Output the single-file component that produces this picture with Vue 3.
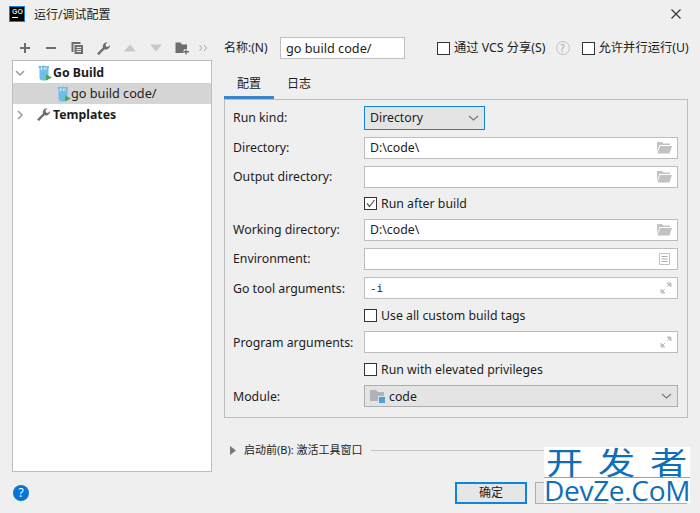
<template>
  <div class="dialog">
    <header class="titlebar">
      <span class="app-logo"><b>GO</b><i></i></span>
      <span class="title-text">运行/调试配置</span>
      <svg class="close" width="10" height="10" viewBox="0 0 10 10">
        <path d="M.5 .5l9 9M9.500 .5l-9 9" stroke="#333" stroke-width="1.200" fill="none" />
      </svg>
    </header>

    <div class="content">
      <aside class="side">
        <div class="toolbar">
          <svg width="14" height="14" viewBox="0 0 14 14"><path d="M7 2v10M2 7h10" stroke="#6e6e6e" stroke-width="2" /></svg>
          <svg width="14" height="14" viewBox="0 0 14 14"><path d="M2 7h10" stroke="#6e6e6e" stroke-width="2" /></svg>
          <svg width="14" height="14" viewBox="0 0 14 14">
            <path d="M1.500 1h9v2H3.500v8h-2z" fill="#6e6e6e" />
            <path d="M4.500 4h8.500v9H4.500z" fill="#6e6e6e" />
            <path d="M6.500 6.500h4.500M6.500 8.500h4.500M6.500 10.500h4.500" stroke="#eee" stroke-width="1" />
          </svg>
          <svg width="15" height="15" viewBox="0 0 15 15">
            <path d="M1 12.500L7 6.500C6.300 4 8 1 11.500 1.200L9.500 3.500l.5 2 2 .5L14 4C14.200 7.500 11 9 8.500 8.300L3 14z" fill="#6e6e6e" />
          </svg>
          <svg width="14" height="14" viewBox="0 0 14 14"><path d="M1 10.500L7 3.500 13 10.500z" fill="#c8c8c8" /></svg>
          <svg width="14" height="14" viewBox="0 0 14 14"><path d="M1 3.500L7 10.500 13 3.500z" fill="#c8c8c8" /></svg>
          <svg width="15" height="14" viewBox="0 0 15 14">
            <path d="M0.500 1.500h5l1.500 2h5v8.500H0.500z" fill="#6e6e6e" />
            <path d="M11 8v5.500M8.500 10.700h5.500" stroke="#efefef" stroke-width="3.500" />
            <path d="M11 8.500v5M8.500 10.800h5.500" stroke="#6e6e6e" stroke-width="1.400" />
          </svg>
          <svg class="more" width="9" height="8" viewBox="0 0 9 8"><path d="M0.500 1l2.500 3-2.500 3M5 1l2.500 3L5 7" stroke="#a5a5a5" fill="none" /></svg>
        </div>

        <div class="tree">
          <div class="tree-row">
            <svg class="arrow" width="10" height="10" viewBox="0 0 10 10"><path d="M1 3l4 4 4-4" stroke="#9a9a9a" stroke-width="1.500" fill="none" /></svg>
            <svg class="gopher" width="14" height="16" viewBox="0 0 14 16">
              <path d="M.5 1.500C1 .5 2.500 .5 3 1.300 4.500 .3 7 .3 8.500 1.300 9 .5 10.500 .5 11 1.500c.3 .8 0 1.300-.5 1.700V12c0 2.500-1 3.500-4.500 3.500S1.500 14.500 1.500 12V3.200C1 2.800 .2 2.300 .5 1.500z" fill="#6cbfe6" />
              <circle cx="4" cy="3.800" r="1.400" fill="#fff" /><circle cx="7.600" cy="3.800" r="1.400" fill="#fff" />
              <circle cx="4.300" cy="3.900" r=".6" fill="#33566b" /><circle cx="7.900" cy="3.900" r=".6" fill="#33566b" />
              <path d="M8 9.500l6 3-6 3z" fill="#4ca64c" />
            </svg>
            <b>Go Build</b>
          </div>
          <div class="tree-row selected child">
            <svg class="gopher" width="14" height="16" viewBox="0 0 14 16">
              <path d="M.5 1.500C1 .5 2.500 .5 3 1.300 4.500 .3 7 .3 8.500 1.300 9 .5 10.500 .5 11 1.500c.3 .8 0 1.300-.5 1.700V12c0 2.500-1 3.500-4.500 3.500S1.500 14.500 1.500 12V3.200C1 2.800 .2 2.300 .5 1.500z" fill="#6cbfe6" />
              <circle cx="4" cy="3.800" r="1.400" fill="#fff" /><circle cx="7.600" cy="3.800" r="1.400" fill="#fff" />
              <circle cx="4.300" cy="3.900" r=".6" fill="#33566b" /><circle cx="7.900" cy="3.900" r=".6" fill="#33566b" />
              <path d="M8 9.500l6 3-6 3z" fill="#4ca64c" />
            </svg>
            <span class="config-name">go build code/</span>
          </div>
          <div class="tree-row">
            <svg class="arrow" width="10" height="10" viewBox="0 0 10 10"><path d="M3 1l4 4-4 4" stroke="#9a9a9a" stroke-width="1.500" fill="none" /></svg>
            <svg class="wrench" width="15" height="15" viewBox="0 0 15 15">
              <path d="M1 12.500L7 6.500C6.300 4 8 1 11.500 1.200L9.500 3.500l.5 2 2 .5L14 4C14.200 7.500 11 9 8.500 8.300L3 14z" fill="#6e6e6e" />
            </svg>
            <b>Templates</b>
          </div>
        </div>
      </aside>

      <main class="main">
        <div class="name-row">
          <label class="name-label">名称:(N)</label>
          <div class="input name-input"><span class="config-name">go build code/</span></div>
          <label class="check vcs"><span class="box"></span>通过 VCS 分享(S)</label>
          <span class="help-grey">?</span>
          <label class="check"><span class="box"></span>允许并行运行(U)</label>
        </div>

        <div class="tabs">
          <span class="tab active">配置</span>
          <span class="tab">日志</span>
        </div>

        <section class="panel">
          <div class="form-row">
            <label>Run kind:</label>
            <div class="combo focus"><span>Directory</span><svg width="11" height="7" viewBox="0 0 11 7"><path d="M1 1l4.500 4L10 1" stroke="#777" stroke-width="1.200" fill="none" /></svg></div>
          </div>
          <div class="form-row">
            <label>Directory:</label>
            <div class="input field"><span>D:\code\</span><svg class="folder" width="15" height="12" viewBox="0 0 15 12"><path d="M0 0h5l1.500 1.500H13V3H2.500L0 10z" fill="#c2c2c2" /><path d="M3 4h12l-2.500 7.500H.5z" fill="#c2c2c2" /></svg></div>
          </div>
          <div class="form-row">
            <label>Output directory:</label>
            <div class="input field"><span></span><svg class="folder" width="15" height="12" viewBox="0 0 15 12"><path d="M0 0h5l1.500 1.500H13V3H2.500L0 10z" fill="#c2c2c2" /><path d="M3 4h12l-2.500 7.500H.5z" fill="#c2c2c2" /></svg></div>
          </div>
          <div class="form-row check-row tall-17">
            <label></label>
            <div class="check"><span class="box"><svg width="11" height="11" viewBox="0 0 11 11"><path d="M2 5.500l2.500 3L9.500 2" stroke="#555" stroke-width="1.200" fill="none" /></svg></span><span>Run after build</span></div>
          </div>
          <div class="form-row">
            <label>Working directory:</label>
            <div class="input field"><span>D:\code\</span><svg class="folder" width="15" height="12" viewBox="0 0 15 12"><path d="M0 0h5l1.500 1.500H13V3H2.500L0 10z" fill="#c2c2c2" /><path d="M3 4h12l-2.500 7.500H.5z" fill="#c2c2c2" /></svg></div>
          </div>
          <div class="form-row">
            <label>Environment:</label>
            <div class="input field"><span></span><svg class="env" width="11" height="12" viewBox="0 0 11 12"><path d="M.5 .5h10v11H.5z" fill="none" stroke="#c2c2c2" /><path d="M2.500 3.500h6M2.500 6h6M2.500 8.500h6" stroke="#b0b0b0" /></svg></div>
          </div>
          <div class="form-row nudge">
            <label>Go tool arguments:</label>
            <div class="input field"><span class="mono">-i</span><svg class="expand" width="12" height="12" viewBox="0 0 12 12"><path d="M7 1h4v4zM1 11V7l4 4zM9.500 2.500L7 5M2.500 9.500L5 7" fill="#c2c2c2" stroke="#c2c2c2" /></svg></div>
          </div>
          <div class="form-row check-row nudge">
            <label></label>
            <div class="check"><span class="box"></span><span class="check-text">Use all custom build tags</span></div>
          </div>
          <div class="form-row nudge">
            <label>Program arguments:</label>
            <div class="input field"><span></span><svg class="expand" width="12" height="12" viewBox="0 0 12 12"><path d="M7 1h4v4zM1 11V7l4 4zM9.500 2.500L7 5M2.500 9.500L5 7" fill="#c2c2c2" stroke="#c2c2c2" /></svg></div>
          </div>
          <div class="form-row check-row nudge">
            <label></label>
            <div class="check"><span class="box"></span><span class="check-text">Run with elevated privileges</span></div>
          </div>
          <div class="form-row nudge">
            <label>Module:</label>
            <div class="combo wide">
              <span class="module">
                <svg width="15" height="13" viewBox="0 0 15 13"><path d="M0 0h6l2 2h6v9H0z" fill="#afb3b8" /><path d="M8 6h7v7H8z" fill="#e4e4e4" /><path d="M9 7h6v6H9z" fill="#4b9fdc" /></svg>
                <span class="check-text">code</span>
              </span>
              <svg width="11" height="7" viewBox="0 0 11 7"><path d="M1 1l4.500 4L10 1" stroke="#777" stroke-width="1.200" fill="none" /></svg>
            </div>
          </div>
        </section>

        <div class="before-run">
          <svg width="6" height="9" viewBox="0 0 6 9"><path d="M0 0l6 4.500L0 9z" fill="#777" /></svg>
          <span>启动前(B): 激活工具窗口</span>
          <i class="rule"></i>
        </div>
      </main>
    </div>

    <footer class="footer">
      <span class="help">?</span>
      <div class="buttons">
        <button class="btn primary">确定</button>
        <button class="btn"></button>
        <button class="btn"></button>
      </div>
    </footer>

    <div class="watermark">
      <div class="wm-top"><span>开</span><span>发</span><span>者</span></div>
      <div class="wm-bottom">DevZe.CoM</div>
    </div>
  </div>
</template>

<script setup>
</script>

<style>
html, body {
  margin: 0;
  background: #efefef;
}
</style>

<style scoped>
* {
  box-sizing: border-box;
}

.dialog {
  position: relative;
  width: 700px;
  height: 513px;
  overflow: hidden;
  background: #efefef;
  color: #1c1c1c;
  font-family: "Noto Sans", "Noto Sans CJK SC", sans-serif;
  font-size: 12.3px;
  line-height: 16px;
}

.titlebar {
  display: flex;
  align-items: center;
  height: 30px;
  padding: 0 19px 0 9px;
}

.app-logo {
  display: flex;
  flex-direction: column;
  width: 16px;
  height: 16px;
  margin: -2px 9px 0 0;
  padding: 1px 2px;
  background: #000;
  border: 1px solid #1380d8;
}

.app-logo b {
  font-size: 7px;
  line-height: 7px;
  color: #ddd;
  font-family: "Liberation Sans", sans-serif;
}

.app-logo i {
  display: block;
  width: 6px;
  height: 1px;
  margin-top: 2px;
  background: #fff;
}

.title-text {
  flex: 1;
  font-size: 12px;
}

.close {
  margin-top: -2px;
}

.content {
  display: flex;
  height: 442px;
}

.side {
  width: 224px;
  padding-left: 12px;
}

.toolbar {
  display: flex;
  align-items: center;
  height: 30px;
  padding: 6px 0 0 6px;
  gap: 12px;
}

.more {
  margin-left: -3px;
}

.tree {
  width: 200px;
  height: 412px;
  padding-top: 1px;
  background: #fff;
  border: 1px solid #bdbdbd;
}

.tree-row {
  display: flex;
  align-items: center;
  height: 21px;
  padding-left: 2px;
}

.tree-row b {
  font-weight: 700;
  margin-left: 2px;
}

.tree-row .arrow {
  margin-right: 11px;
}

.tree-row .arrow + .gopher {
  margin-left: 2px;
}

.tree-row .gopher + b {
  margin-left: 1px;
}

.tree-row.child {
  padding-left: 44px;
}

.config-name {
  font-size: 12.7px;
}

.tree .config-name {
  margin-top: -2px;
}

.selected {
  background: #d5d5d5;
}

.main {
  width: 464px;
}

.name-row {
  display: flex;
  align-items: center;
  height: 22px;
  margin-top: 7px;
  white-space: nowrap;
}

.name-row > * {
  flex: none;
}

.name-label {
  width: 56px;
  font-size: 12px;
}

.input {
  display: flex;
  align-items: center;
  background: #fff;
  border: 1px solid #bdbdbd;
  padding: 0 5px;
}

.name-input {
  width: 125px;
  height: 22px;
}

.vcs {
  margin-left: 32px;
}

.help-grey {
  width: 14px;
  height: 14px;
  margin: 0 12px 0 10px;
  border: 1px solid #c2c2c2;
  border-radius: 50%;
  color: #a8a8a8;
  font-size: 10px;
  line-height: 12px;
  text-align: center;
}

.check {
  display: flex;
  align-items: center;
}

.box {
  display: flex;
  width: 13px;
  height: 13px;
  margin-right: 4px;
  background: #fff;
  border: 1px solid #333;
}

.tabs {
  display: flex;
  height: 40px;
  padding-top: 17px;
}

.tab {
  width: 50px;
  height: 23px;
  font-size: 12px;
  text-align: center;
}

.tab.active {
  border-bottom: 3px solid #3a85cc;
}

.panel {
  display: flex;
  flex-direction: column;
  gap: 7px;
  height: 319px;
  padding: 6px 9px 0 8px;
  border: 1px solid #bdbdbd;
}

.form-row {
  display: flex;
  align-items: center;
  height: 22px;
  flex: none;
}

.form-row:first-child {
  height: 24px;
}

.form-row label {
  width: 131px;
  flex: none;
}

/* text in the lower rows sits a pixel under the centre */
.nudge label,
.nudge .mono,
.nudge .check-text {
  padding-top: 2px;
}

.check-row {
  height: 18px;
}

.tall-17 {
  height: 17px;
}

.field {
  width: 314px;
  height: 22px;
  justify-content: space-between;
}

.field svg {
  flex: none;
}

.field .env {
  margin-right: 2px;
}

.mono {
  font-family: "DejaVu Sans Mono", monospace;
  font-size: 11px;
}

.combo {
  display: flex;
  align-items: center;
  justify-content: space-between;
  height: 22px;
  padding: 0 5px;
  background: #e4e4e4;
  border: 1px solid #adadad;
}

.combo.focus {
  width: 121px;
  height: 24px;
  border-color: #0f84dc;
}

.combo.wide {
  width: 314px;
}

.module {
  display: flex;
  align-items: center;
  gap: 4px;
}

.before-run {
  display: flex;
  align-items: center;
  height: 16px;
  margin-top: 24px;
  padding-left: 6px;
  gap: 8px;
  font-size: 11px;
}

.rule {
  flex: 1;
  height: 1px;
  background: #c4c4c4;
}

.footer {
  display: flex;
  align-items: center;
  justify-content: space-between;
  height: 41px;
  padding: 0 13px;
}

.help {
  width: 16px;
  height: 16px;
  border-radius: 50%;
  background: #0a74d6;
  color: #fff;
  font-size: 12px;
  line-height: 16px;
  text-align: center;
}

.buttons {
  display: flex;
  gap: 8px;
}

.btn {
  width: 72px;
  height: 22px;
  padding: 0;
  background: #e6e6e6;
  border: 1px solid #adadad;
  color: #1c1c1c;
  font: inherit;
  font-size: 12px;
}

.btn.primary {
  border: 2px solid #0f84dc;
}

/* site stamp over the corner of the screenshot */
.watermark {
  position: absolute;
  left: 544px;
  top: 447px;
  width: 146px;
  height: 56px;
  background: #fff;
  color: #0f6eb8;
}

.wm-top {
  display: flex;
  justify-content: space-between;
  height: 31px;
  padding: 0 6px 0 5px;
  border-bottom: 1px solid #5cb8ec;
  font-size: 31px;
  line-height: 30px;
}

.wm-top span {
  display: block;
  transform: scaleX(1.2);
}

.wm-bottom {
  font-size: 28px;
  line-height: 25px;
  font-family: "Open Sans", sans-serif;
  letter-spacing: -0.3px;
  white-space: nowrap;
}
</style>
